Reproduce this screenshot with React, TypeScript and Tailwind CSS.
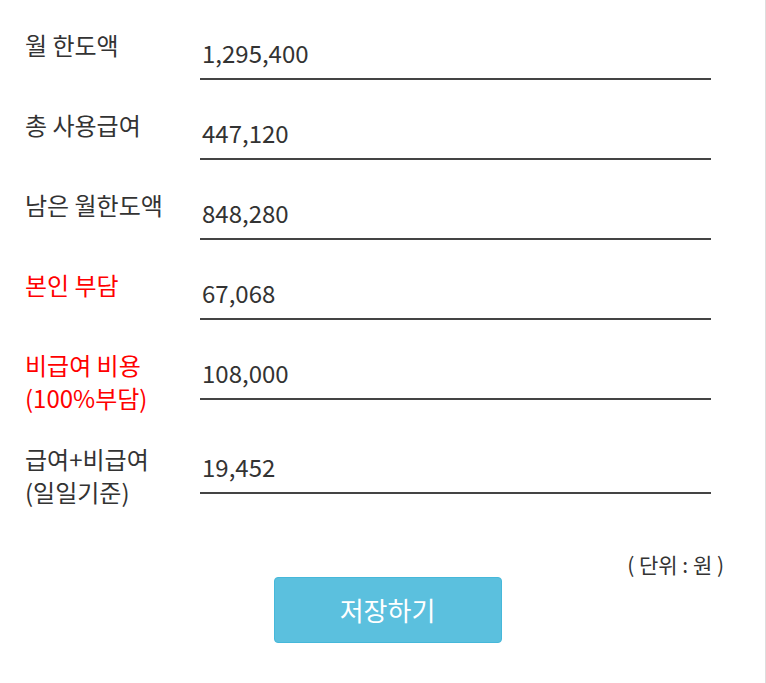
import React from 'react';

type Row = { label: string[]; value: string; red?: boolean };

const rows: Row[] = [
  { label: ['월 한도액'], value: '1,295,400' },
  { label: ['총 사용급여'], value: '447,120' },
  { label: ['남은 월한도액'], value: '848,280' },
  { label: ['본인 부담'], value: '67,068', red: true },
  { label: ['비급여 비용', '(100%부담)'], value: '108,000', red: true },
  { label: ['급여+비급여', '(일일기준)'], value: '19,452' },
];

const font = { fontFamily: '"Noto Sans CJK KR", "Noto Sans", sans-serif' };

export default function App() {
  return (
    <div className="w-[766px] h-[683px] bg-white border-r border-[#dddddd] text-[#333333]" style={font}>
      <div className="pl-[25px] pt-[28px] w-[711px]">
        {rows.map((row, i) => (
          <div key={i} className="flex items-start mb-[28px] last:mb-0">
            <div className={`w-[175px] shrink-0 text-[24px] leading-[33px] ${row.red ? 'text-[#ff0000]' : ''}`}>
              {row.label.map((l) => (
                <div key={l}>{l}</div>
              ))}
            </div>
            <div className="flex-1 mt-[8px] pb-[9px] border-b-2 border-[#444444]">
              <div className="pl-[2px] text-[24px] leading-[33px]">{row.value}</div>
            </div>
          </div>
        ))}
      </div>

      <div className="w-[724px] mt-[43px] text-right text-[21px] leading-[26px] text-[#333333]">( 단위 : 원 )</div>

      <div className="w-[775px] flex justify-center">
        <button className="w-[228px] h-[66px] rounded-[4px] bg-[#5bc0de] border border-[#46b8da] text-white text-[26px] leading-none">
          저장하기
        </button>
      </div>
    </div>
  );
}
